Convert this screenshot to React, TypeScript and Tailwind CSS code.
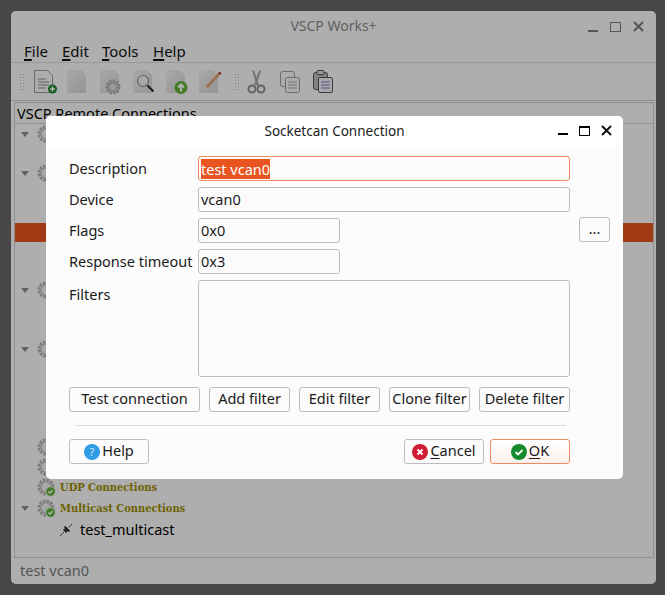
import React from 'react';

const font = { fontFamily: '"Noto Sans", sans-serif' };

const Gear = ({ check = false }: { check?: boolean }) => (
  <svg width="20" height="20" viewBox="0 0 20 20" className="shrink-0">
    <circle cx="9" cy="10" r="6.8" fill="none" stroke="#b0b0b0" strokeWidth="3.4" strokeDasharray="2.4 1.2" />
    <circle cx="9" cy="10" r="5" fill="none" stroke="#c8c8c8" strokeWidth="1.6" />
    <circle cx="9" cy="10" r="3.4" fill="#f0f0f0" />
    {check && (
      <>
        <circle cx="13.5" cy="14.5" r="4.8" fill="#5fb336" stroke="#f4f4f4" strokeWidth="0.8" />
        <path d="M11.3 14.5l1.6 1.6 2.8-2.9" fill="none" stroke="#fff" strokeWidth="1.4" />
      </>
    )}
  </svg>
);

const Arrow = () => (
  <svg width="8" height="5" viewBox="0 0 8 5" className="shrink-0">
    <path d="M0 0h8L4 5z" fill="#8c8c8c" />
  </svg>
);

const Sheet = ({ children, outline = false }: { children?: React.ReactNode; outline?: boolean }) => (
  <svg width="28" height="26" viewBox="0 0 28 26">
    <defs>
      <linearGradient id="sheet" x1="0" y1="0" x2="1" y2="1">
        <stop offset="0" stopColor="#f2f2f2" />
        <stop offset="1" stopColor="#d4d4d4" />
      </linearGradient>
    </defs>
    {outline ? (
      <path d="M2.5 1.5h13l5 5v17h-18z" fill="#f6f6f6" stroke="#9a9a9a" strokeLinejoin="round" />
    ) : (
      <path d="M2 1h14l5 5v18H2z" fill="url(#sheet)" />
    )}
    {children}
  </svg>
);

const Grip = () => (
  <div className="grid grid-cols-2 gap-x-[2px] gap-y-[2px] w-[4px]">
    {Array.from({ length: 12 }).map((_, i) => (
      <span key={i} className="w-[1px] h-[1px] bg-[#b8b8b8]" />
    ))}
  </div>
);

const Toolbar = () => (
  <div className="h-[38px] flex items-center pl-[9px] border-b border-[#cfcfcf]">
    <Grip />
    <div className="w-[33px] flex justify-center ml-[5px]">
      <Sheet outline>
        <path d="M6 10h8M6 13h11M6 16h11M6 19h7" stroke="#8a8a8a" strokeWidth="1" />
        <circle cx="20.5" cy="20" r="4.5" fill="#1f8a2b" />
        <path d="M18 20h5M20.5 17.5v5" stroke="#fff" strokeWidth="1.5" />
      </Sheet>
    </div>
    <div className="w-[33px] flex justify-center">
      <Sheet />
    </div>
    <div className="w-[33px] flex justify-center">
      <Sheet>
        <circle cx="15" cy="18" r="6" fill="none" stroke="#aaa" strokeWidth="3" strokeDasharray="2.2 1.2" />
        <circle cx="15" cy="18" r="4" fill="none" stroke="#bdbdbd" strokeWidth="1.8" />
      </Sheet>
    </div>
    <div className="w-[33px] flex justify-center">
      <Sheet>
        <circle cx="12" cy="12" r="5.5" fill="#f8f8f8" fillOpacity="0.6" stroke="#8f8f8f" strokeWidth="1.2" />
        <path d="M16.5 16.5l6 6" stroke="#222" strokeWidth="2" />
      </Sheet>
    </div>
    <div className="w-[33px] flex justify-center">
      <Sheet>
        <circle cx="17" cy="18.5" r="6.5" fill="#63b334" />
        <path d="M17 22.5v-6M14 18.5l3-3 3 3" fill="none" stroke="#fff" strokeWidth="2" />
      </Sheet>
    </div>
    <div className="w-[33px] flex justify-center">
      <Sheet>
        <path d="M10 18L22 5" stroke="#e2a070" strokeWidth="2.6" />
        <path d="M22 5l1.5-1.5" stroke="#9b2c20" strokeWidth="2.6" />
      </Sheet>
    </div>
    <div className="ml-[8px]">
      <Grip />
    </div>
    <div className="w-[33px] flex justify-center ml-[1px]">
      <svg width="20" height="24" viewBox="0 0 20 24">
        <path d="M6 0.5l5 15M13 0.5L8 15.5" stroke="#a8a8a8" strokeWidth="2.2" fill="none" />
        <circle cx="5" cy="19" r="3.5" fill="none" stroke="#8f8f8f" strokeWidth="2" />
        <circle cx="14" cy="19" r="3.5" fill="none" stroke="#8f8f8f" strokeWidth="2" />
      </svg>
    </div>
    <div className="w-[33px] flex justify-center">
      <svg width="22" height="24" viewBox="0 0 22 24">
        <rect x="1.5" y="1.5" width="14" height="15" rx="2" fill="#f6f6f6" stroke="#9a9a9a" />
        <rect x="6.5" y="7.5" width="14" height="15" rx="2" fill="#f6f6f6" stroke="#9a9a9a" />
        <path d="M9 12h9M9 15h9M9 18h9" stroke="#aaa" />
      </svg>
    </div>
    <div className="w-[33px] flex justify-center">
      <svg width="22" height="24" viewBox="0 0 22 24">
        <rect x="1.5" y="2.5" width="14" height="17" rx="2" fill="#bbb" stroke="#555" />
        <rect x="5" y="0.5" width="7" height="4" rx="1" fill="#ddd" stroke="#555" />
        <rect x="6.5" y="7.5" width="14" height="15" rx="1.5" fill="#f2f2f8" stroke="#555" />
        <path d="M9 12h9M9 15h9M9 18h9" stroke="#7d7dc8" />
      </svg>
    </div>
  </div>
);

const Plug = () => (
  <svg width="14" height="14" viewBox="0 0 14 14" className="shrink-0">
    <path d="M1 13L5 9M9.5 4.5L13 1" stroke="#555" strokeWidth="1" />
    <path d="M4 7l3 3 3-3-3-3z" fill="#3a3a3a" />
    <path d="M5.5 3.5l5 5" stroke="#222" strokeWidth="1.6" />
  </svg>
);

const rows = [
  { mt: 'mt-0', arrow: true },
  { mt: 'mt-[19px]', arrow: true },
  { mt: 'mt-[97px]', arrow: true },
  { mt: 'mt-[39px]', arrow: true },
  { mt: 'mt-[78px]', arrow: false },
  { mt: 'mt-0', arrow: false },
  { mt: 'mt-0', arrow: false, check: true, label: 'UDP Connections' },
  { mt: 'mt-px', arrow: true, check: true, label: 'Multicast Connections' },
];

const Tree = () => (
  <div className="relative flex-1">
    <div className="absolute left-0 right-0 top-[99px] h-[19px] bg-[#e95420]" />
    {rows.map((r, i) => (
      <div key={i} className={`${r.mt} relative h-[20px] flex items-center`}>
        <div className="w-[6px] shrink-0" />
        <div className="w-[8px] shrink-0">{r.arrow && <Arrow />}</div>
        <div className="w-[8px] shrink-0" />
        <Gear check={r.check} />
        {r.label && (
          <span
            className="ml-[3px] mt-[2px] text-[11px] font-bold text-[#9c8d00] whitespace-nowrap"
            style={{ fontFamily: '"DejaVu Serif", serif', fontStretch: 'condensed' }}
          >
            {r.label}
          </span>
        )}
      </div>
    ))}
    <div className="mt-[2px] h-[20px] flex items-center pl-[44px] gap-[7px]">
      <Plug />
      <span className="text-[14.5px] text-black">test_multicast</span>
    </div>
  </div>
);

const Btn = ({ w, children, primary = false }: { w: string; children: React.ReactNode; primary?: boolean }) => (
  <div
    className={`${w} h-[25px] pb-[2px] flex items-center justify-center rounded-[3px] border text-[14.5px] text-[#1a1a1a] whitespace-nowrap ${
      primary ? 'border-[#ee8a64] bg-gradient-to-b from-white to-[#fbf0ec]' : 'border-[#bdbdbd] bg-[#fbfbfb]'
    }`}
  >
    {children}
  </div>
);

const Field = ({ className, children }: { className: string; children?: React.ReactNode }) => (
  <div className={`${className} border border-[#bdbdbd] bg-[#fbfbfb] rounded-[3px] px-[2px] flex items-center text-[14.5px] text-[#1a1a1a]`}>
    {children}
  </div>
);

const FormRow = ({ label, children }: { label: string; children: React.ReactNode }) => (
  <div className="h-[25px] flex items-center">
    <span className="w-[129px] shrink-0 text-[14.5px] text-[#1a1a1a] whitespace-nowrap">{label}</span>
    {children}
  </div>
);

const Dialog = () => (
  <div className="absolute z-20 left-[35px] top-[105px] w-[577px] h-[363px] bg-[#fcfcfc] rounded-[5px] flex flex-col">
    <div className="h-[30px] relative flex items-center justify-center bg-white rounded-t-[5px] text-[13.5px] text-[#1a1a1a]">
      Socketcan Connection
      <div className="absolute right-[11px] top-[9px] flex items-end gap-[11px]">
        <div className="w-[10px] h-[2px] bg-black mb-[1px]" />
        <div className="w-[11px] h-[10px] border border-black border-t-2" />
        <svg width="11" height="11" viewBox="0 0 11 11">
          <path d="M1 1l9 9M10 1l-9 9" stroke="#111" strokeWidth="2" />
        </svg>
      </div>
    </div>
    <div className="pl-[23px] pr-[13px] pt-[10px] flex flex-col gap-[6px]">
      <FormRow label="Description">
        <Field className="w-[372px] h-[25px] !border-[#ee8a64]">
          <span className="bg-[#e95420] text-white leading-[20px]">test vcan0</span>
        </Field>
      </FormRow>
      <FormRow label="Device">
        <Field className="w-[372px] h-[25px]">vcan0</Field>
      </FormRow>
      <FormRow label="Flags">
        <Field className="w-[142px] h-[25px]">0x0</Field>
        <div className="ml-auto -mt-[2px]">
          <Btn w="w-[31px]">...</Btn>
        </div>
      </FormRow>
      <FormRow label="Response timeout">
        <Field className="w-[142px] h-[25px]">0x3</Field>
      </FormRow>
      <div className="flex items-start">
        <span className="w-[129px] shrink-0 text-[14.5px] text-[#1a1a1a] mt-[4px]">Filters</span>
        <Field className="w-[372px] h-[97px]" />
      </div>
      <div className="flex gap-[9px] mt-[4px]">
        <Btn w="w-[131px]">Test connection</Btn>
        <Btn w="w-[81px]">Add filter</Btn>
        <Btn w="w-[81px]">Edit filter</Btn>
        <Btn w="w-[81px]">Clone filter</Btn>
        <Btn w="w-[91px]">Delete filter</Btn>
      </div>
      <div className="h-px bg-[#dcdcdc] ml-[7px] mr-[44px] mt-[7px]" />
      <div className="flex mt-[7px] w-[501px]">
        <Btn w="w-[80px]">
          <svg width="16" height="16" viewBox="0 0 16 16" className="mr-[2px] mt-[2px]">
            <circle cx="8" cy="8" r="8" fill="#2f9be4" />
            <text x="8" y="12" textAnchor="middle" fontSize="11" fill="#cfe9fb" style={font}>?</text>
          </svg>
          Help
        </Btn>
        <div className="ml-auto flex gap-[6px]">
          <Btn w="w-[80px]">
            <svg width="16" height="16" viewBox="0 0 16 16" className="mr-[2px] mt-[2px]">
              <circle cx="8" cy="8" r="8" fill="#cf1b36" />
              <path d="M5.5 5.5l5 5M10.5 5.5l-5 5" stroke="#fff" strokeWidth="1.8" />
            </svg>
            <span className="underline underline-offset-2">C</span>ancel
          </Btn>
          <Btn w="w-[80px]" primary>
            <svg width="16" height="16" viewBox="0 0 16 16" className="mr-[2px] mt-[2px]">
              <circle cx="8" cy="8" r="8" fill="#148a2c" />
              <path d="M4.5 8l2.5 2.5 4.5-4.5" fill="none" stroke="#fff" strokeWidth="1.8" />
            </svg>
            <span className="underline underline-offset-2">O</span>K
          </Btn>
        </div>
      </div>
    </div>
  </div>
);

const menus = [
  { first: 'F', rest: 'ile', w: 'w-[38px]' },
  { first: 'E', rest: 'dit', w: 'w-[40px]' },
  { first: 'T', rest: 'ools', w: 'w-[51px]' },
  { first: 'H', rest: 'elp', w: 'w-[40px]' },
];

export default function App() {
  return (
    <div className="w-[665px] h-[595px] bg-[#474747] p-[11px]" style={font}>
      <div className="relative w-[645px] h-[573px] bg-[#f9f9f9] rounded-[5px] flex flex-col overflow-hidden">
        <div className="h-[29px] relative flex items-center justify-center text-[14px] text-[#8c8c8c]">
          VSCP Works+
          <div className="absolute right-[12px] top-[10px] flex items-end gap-[12px]">
            <div className="w-[10px] h-[2px] bg-[#7a7a7a]" />
            <div className="w-[11px] h-[10px] border border-[#7a7a7a]" />
            <svg width="11" height="11" viewBox="0 0 11 11">
              <path d="M1 1l9 9M10 1l-9 9" stroke="#7a7a7a" strokeWidth="2" />
            </svg>
          </div>
        </div>
        <div className="h-[22px] flex items-center pl-[13px] text-[15px] text-[#111] border-b border-[#dcdcdc] box-content">
          {menus.map(m => (
            <span key={m.first} className={m.w}>
              <span className="underline decoration-2 underline-offset-2">{m.first}</span>
              {m.rest}
            </span>
          ))}
        </div>
        <Toolbar />
        <div className="ml-[3px] mr-[2px] mt-px border border-[#cfcfcf] flex flex-col h-[456px]">
          <div className="h-[21px] border-b border-[#cfcfcf] text-[14.5px] leading-[20px] pl-[2px] text-black">
            VSCP Remote Connections
          </div>
          <Tree />
        </div>
        <div className="flex-1 flex items-center pl-[9px] text-[14.5px] text-[#7a7a7a]">test vcan0</div>
        <div className="absolute inset-0 z-10 bg-black/30" />
        <Dialog />
      </div>
    </div>
  );
}
